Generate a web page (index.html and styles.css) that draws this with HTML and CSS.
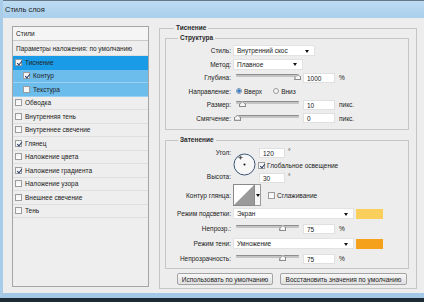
FILE: index.html
```html
<!DOCTYPE html>
<html lang="ru">

<head>
    <meta charset="UTF-8">
    <meta name="viewport" content="width=device-width, initial-scale=1.0">
    <title>Стиль слоя</title>
    <link rel="stylesheet" href="styles.css">
</head>

<body>

    <div class="window">
        <div class="titlebar">Стиль слоя</div>

        <div class="client">
            <!-- List of styles -->
            <div class="styles-list">
                <div class="list-head">Стили</div>
                <div class="list-item options">Параметры наложения: по умолчанию</div>
                <div class="list-item selected"><span class="cb checked"></span>Тиснение</div>
                <div class="list-item sub"><span class="cb checked"></span>Контур</div>
                <div class="list-item sub"><span class="cb"></span>Текстура</div>
                <div class="list-item"><span class="cb"></span>Обводка</div>
                <div class="list-item"><span class="cb"></span>Внутренняя тень</div>
                <div class="list-item"><span class="cb"></span>Внутреннее свечение</div>
                <div class="list-item"><span class="cb checked"></span>Глянец</div>
                <div class="list-item"><span class="cb"></span>Наложение цвета</div>
                <div class="list-item"><span class="cb checked"></span>Наложение градиента</div>
                <div class="list-item"><span class="cb"></span>Наложение узора</div>
                <div class="list-item"><span class="cb"></span>Внешнее свечение</div>
                <div class="list-item"><span class="cb"></span>Тень</div>
            </div>

            <!-- Bevel settings -->
            <fieldset class="group outer">
                <legend>Тиснение</legend>

                <fieldset class="group structure">
                    <legend>Структура</legend>
                    <div class="row">
                        <span class="lbl">Стиль:</span>
                        <span class="select w-style">Внутренний скос</span>
                    </div>
                    <div class="row">
                        <span class="lbl">Метод:</span>
                        <span class="select w-method">Плавное</span>
                    </div>
                    <div class="row">
                        <span class="lbl">Глубина:</span>
                        <span class="slider"><span class="thumb" style="left: 96%"></span></span>
                        <span class="num">1000</span>
                        <span class="unit">%</span>
                    </div>
                    <div class="row">
                        <span class="lbl">Направление:</span>
                        <span class="radio on"></span>Вверх
                        <span class="radio down"></span>Вниз
                    </div>
                    <div class="row">
                        <span class="lbl">Размер:</span>
                        <span class="slider"><span class="thumb" style="left: 8%"></span></span>
                        <span class="num">10</span>
                        <span class="unit">пикс.</span>
                    </div>
                    <div class="row">
                        <span class="lbl">Смягчение:</span>
                        <span class="slider"><span class="thumb" style="left: 0%"></span></span>
                        <span class="num">0</span>
                        <span class="unit">пикс.</span>
                    </div>
                </fieldset>

                <fieldset class="group shading">
                    <legend>Затенение</legend>
                    <div class="angle">
                        <div class="angle-labels">
                            <span>Угол:</span>
                            <span>Высота:</span>
                        </div>
                        <svg class="dial" width="23" height="23" viewBox="0 0 23 23">
                            <circle cx="11.5" cy="11.5" r="10.5" fill="#f7f7f7" stroke="#3d5577" stroke-width="1" />
                            <circle cx="11.5" cy="11.5" r="1" fill="#111" />
                            <path d="M7.5 2.5v4M5.5 4.5h4" stroke="#444" stroke-width="0.8" />
                            <circle cx="7.5" cy="4.5" r="1.2" fill="none" stroke="#666" stroke-width="0.5" />
                        </svg>
                        <div class="angle-fields">
                            <div class="field"><span class="num short">120</span><span class="deg">°</span></div>
                            <div class="field"><span class="cb checked"></span>Глобальное освещение</div>
                            <div class="field"><span class="num short">30</span><span class="deg">°</span></div>
                        </div>
                    </div>
                    <div class="row contour-row">
                        <span class="lbl">Контур глянца:</span>
                        <span class="contour">
                            <svg width="22" height="22" viewBox="0 0 22 22">
                                <rect x="0.5" y="0.5" width="21" height="21" fill="#fff" stroke="#8a8a8a" />
                                <path d="M1 21 L21 1 L21 21 Z" fill="#9a9a9a" />
                            </svg>
                            <span class="contour-arrow"></span>
                        </span>
                        <span class="cb smooth"></span>Сглаживание
                    </div>
                    <div class="row tall">
                        <span class="lbl">Режим подсветки:</span>
                        <span class="select w-mode">Экран</span>
                        <span class="swatch" style="background: #fbcf5c"></span>
                    </div>
                    <div class="row tall">
                        <span class="lbl">Непрозр.:</span>
                        <span class="slider"><span class="thumb" style="left: 72%"></span></span>
                        <span class="num">75</span>
                        <span class="unit">%</span>
                    </div>
                    <div class="row tall">
                        <span class="lbl">Режим тени:</span>
                        <span class="select w-mode">Умножение</span>
                        <span class="swatch" style="background: #f6a11c"></span>
                    </div>
                    <div class="row tall">
                        <span class="lbl">Непрозрачность:</span>
                        <span class="slider"><span class="thumb" style="left: 72%"></span></span>
                        <span class="num">75</span>
                        <span class="unit">%</span>
                    </div>
                </fieldset>

                <div class="buttons">
                    <button class="btn">Использовать по умолчанию</button>
                    <button class="btn wide">Восстановить значения по умолчанию</button>
                </div>
            </fieldset>
        </div>
    </div>

</body>

</html>
```

FILE: styles.css
```css
* {
    margin: 0;
    padding: 0;
    box-sizing: border-box;
}

body {
    width: 424px;
    height: 302px;
    overflow: hidden;
    background-color: #1e2a34;
    font-family: "Liberation Sans", Arial, sans-serif;
    font-size: 6.5px;
    color: #222;
}

.window {
    height: 298px;
    border-left: 3px solid #a9cde9;
    border-bottom: 5px solid #a4c8e5;
    background-color: #ededed;
    display: flex;
    flex-direction: column;
}

.titlebar {
    height: 18px;
    border-top: 1px solid #65798a;
    background: linear-gradient(#bddcf2, #a9cfeb);
    padding-left: 2px;
    line-height: 17px;
    font-size: 7.5px;
    color: #1b1b1b;
}

.client {
    flex: 1;
    display: flex;
    align-items: flex-start;
    padding: 5px 0 0 9px;
}

/* Styles list on the left */
.styles-list {
    width: 137px;
    height: 261px;
    margin-top: 3px;
    border: 1px solid #a5a5a5;
    background-color: #eeeeee;
    flex: none;
}

.list-head {
    height: 14px;
    line-height: 13px;
    padding-left: 3px;
    background-color: #f5f5f5;
    border-bottom: 1px solid #c9c9c9;
}

.list-item {
    height: 13.5px;
    display: flex;
    align-items: center;
    padding-left: 2px;
    border-bottom: 1px solid #dedede;
}

.list-item.options {
    height: 15px;
    padding-left: 3px;
}

.list-item.selected {
    background-color: #1a9be7;
    border-bottom-color: #1a9be7;
}

.list-item.sub {
    background-color: #6cbcec;
    border-bottom-color: #9ad0f1;
    padding-left: 10px;
}

.cb {
    position: relative;
    width: 7px;
    height: 7px;
    margin-right: 3px;
    border: 1px solid #9c9c9c;
    background: linear-gradient(#f2f2f2, #ffffff);
    flex: none;
}

.cb.checked::after {
    content: "";
    position: absolute;
    left: 1.5px;
    top: 0;
    width: 2px;
    height: 4px;
    border-right: 1px solid #2b3d6b;
    border-bottom: 1px solid #2b3d6b;
    transform: rotate(40deg);
}

/* Group boxes */
.group {
    border: 1px solid #c6c6c6;
}

.group legend {
    line-height: 10px;
    padding: 0 2px;
    font-weight: bold;
    color: #2a2a2a;
}

.outer {
    width: 258px;
    height: 266px;
    margin-left: 10px;
    padding: 0 7px 0 5px;
    flex: none;
}

.outer > legend {
    margin-left: 9px;
}

.structure,
.shading {
    padding: 1px 0 4px 0;
}

.structure > legend,
.shading > legend {
    margin-left: 12px;
}

.shading {
    margin-top: 5px;
    padding: 1px 0 2px 0;
}

.row {
    height: 13.5px;
    display: flex;
    align-items: center;
}

.row.tall {
    height: 15px;
}

.lbl {
    width: 65px;
    margin-right: 2px;
    text-align: right;
    flex: none;
}

.select {
    position: relative;
    height: 11px;
    padding-left: 3px;
    display: flex;
    align-items: center;
    background-color: #fff;
    border: 1px solid #e2e2e2;
}

.select::after {
    content: "";
    position: absolute;
    right: 5px;
    top: 3.5px;
    border-left: 2.5px solid transparent;
    border-right: 2.5px solid transparent;
    border-top: 3px solid #111;
}

.w-style {
    width: 82px;
}

.w-method {
    width: 70px;
}

.w-mode {
    width: 121px;
}

.slider {
    position: relative;
    width: 63px;
    height: 11px;
    margin-left: 3px;
}

.slider::before {
    content: "";
    position: absolute;
    left: 0;
    right: 0;
    top: 2px;
    height: 2px;
    border-radius: 1px;
    background-color: #c4c4c4;
    border-top: 1px solid #8d8d8d;
}

.thumb {
    position: absolute;
    top: 2px;
    width: 7px;
    height: 6px;
    margin-left: -2px;
    background-color: #f7f7f7;
    border: 1px solid #8a8a8a;
    border-top: none;
    clip-path: polygon(50% 0, 100% 45%, 100% 100%, 0 100%, 0 45%);
}

.thumb::before {
    content: "";
    position: absolute;
    left: -1px;
    right: -1px;
    top: 0;
    bottom: -1px;
    background-color: #8a8a8a;
    clip-path: polygon(50% 0, 100% 45%, 100% 100%, 0 100%, 0 45%, 15% 50%, 15% 85%, 85% 85%, 85% 50%, 50% 15%, 15% 50%, 0 45%);
}

.num {
    width: 32px;
    height: 10px;
    margin-left: 4px;
    padding-left: 3px;
    line-height: 9px;
    background-color: #fff;
    border: 1px solid #e0e0e0;
}

.num.short {
    width: 26px;
    margin-left: 0;
}

.unit {
    margin-left: 4px;
}

.radio {
    width: 6px;
    height: 6px;
    margin: 0 2px 0 3px;
    border-radius: 50%;
    border: 1px solid #9a9a9a;
    background-color: #f4f4f4;
}

.radio.on {
    background: radial-gradient(circle, #2f6fb8 0, #4b8fd0 55%, #f4f4f4 60%);
    border-color: #7c96b3;
}

.radio.down {
    margin-left: 11px;
}

/* Angle and altitude */
.angle {
    height: 38px;
    display: flex;
}

.angle-labels {
    width: 65px;
    margin-right: 2px;
    padding: 3px 0 4px 0;
    display: flex;
    flex-direction: column;
    justify-content: space-between;
    align-items: flex-end;
    flex: none;
}

.dial {
    margin-top: 7px;
    flex: none;
}

.angle-fields {
    margin-left: 3px;
    padding-top: 2px;
    display: flex;
    flex-direction: column;
    gap: 2.5px;
}

.field {
    height: 10px;
    display: flex;
    align-items: center;
}

.field .cb {
    margin-left: -1px;
    margin-right: 2px;
}

.deg {
    align-self: flex-start;
    margin-left: 3px;
    line-height: 7px;
}

.contour-row {
    height: 22px;
}

.contour {
    display: flex;
    height: 22px;
}

.contour-arrow {
    position: relative;
    width: 6px;
    height: 22px;
    background-color: #f7f7f7;
    border: 1px solid #9a9a9a;
    border-left: none;
}

.contour-arrow::after {
    content: "";
    position: absolute;
    left: 0.5px;
    top: 9px;
    border-left: 2px solid transparent;
    border-right: 2px solid transparent;
    border-top: 3px solid #111;
}

.cb.smooth {
    margin-left: 7px;
    margin-right: 2px;
}

.swatch {
    width: 27px;
    height: 10px;
    margin-left: 2px;
}

/* Buttons at the bottom */
.buttons {
    display: flex;
    justify-content: flex-end;
    gap: 7px;
    margin-top: 4px;
    padding-right: 2px;
}

.btn {
    width: 96px;
    height: 12px;
    font: inherit;
    color: #222;
    border: 1px solid #a3a3a3;
    border-radius: 2px;
    background: linear-gradient(#f8f8f8, #e0e0e0);
}

.btn.wide {
    width: 127px;
}
```
